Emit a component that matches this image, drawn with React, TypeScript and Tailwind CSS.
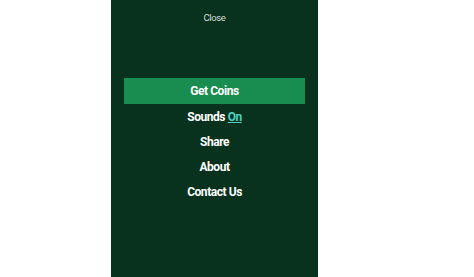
import React from 'react';

export default function App() {
  const items = ['Share', 'About', 'Contact Us'];
  return (
    <div className="w-[474px] h-[277px] bg-white" style={{ fontFamily: 'Roboto, "Liberation Sans", sans-serif' }}>
      <div className="ml-[111px] w-[207px] h-[277px] bg-[#08321d] flex flex-col items-center">
        <div className="mt-[12px] text-[9.5px] leading-[12px] tracking-[-0.4px] text-[#d6ddd8]">Close</div>
        <ul className="mt-[54px] w-full px-[13px] flex flex-col text-white font-bold text-[12px] tracking-[-0.45px]">
          <li className="h-[26px] bg-[#198c4f] flex items-center justify-center">Get Coins</li>
          <li className="h-[25px] flex items-center justify-center">
            Sounds&nbsp;<span className="text-[#4dd2c2] underline">On</span>
          </li>
          {items.map((t) => (
            <li key={t} className="h-[25px] flex items-center justify-center">
              {t}
            </li>
          ))}
        </ul>
      </div>
    </div>
  );
}
